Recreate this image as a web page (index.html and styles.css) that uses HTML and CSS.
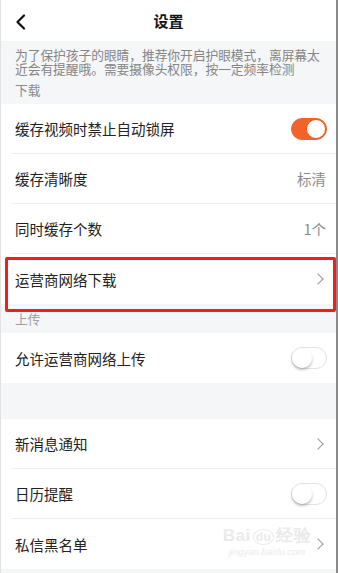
FILE: index.html
```html
<!DOCTYPE html>
<html lang="zh">
<head>
<meta charset="utf-8">
<link rel="stylesheet" href="styles.css">
</head>
<body>
<div class="page">
  <header class="topbar">
    <svg class="back" width="12" height="16" viewBox="0 0 12 16"><path d="M9 1.5 L2.5 8 L9 14.5" fill="none" stroke="#111" stroke-width="2.2" stroke-linecap="round" stroke-linejoin="round"/></svg>
    <div class="title">设置</div>
  </header>
  <div class="notice">为了保护孩子的眼睛，推荐你开启护眼模式，离屏幕太近会有提醒哦。需要摄像头权限，按一定频率检测</div>
  <div class="section-label">下载</div>
  <div class="group">
    <div class="row"><span class="label">缓存视频时禁止自动锁屏</span><span class="switch on"><span class="knob"></span></span></div>
    <div class="row"><span class="label">缓存清晰度</span><span class="value">标清</span></div>
    <div class="row"><span class="label">同时缓存个数</span><span class="value">1个</span></div>
    <div class="row last"><span class="label">运营商网络下载</span><span class="chev"></span></div>
  </div>
  <div class="section-label upload">上传</div>
  <div class="group">
    <div class="row last"><span class="label">允许运营商网络上传</span><span class="switch"><span class="knob"></span></span></div>
  </div>
  <div class="spacer"></div>
  <div class="group">
    <div class="row"><span class="label">新消息通知</span><span class="chev"></span></div>
    <div class="row"><span class="label">日历提醒</span><span class="switch"><span class="knob"></span></span></div>
    <div class="row last"><span class="label">私信黑名单</span><span class="chev"></span></div>
  </div>
  <div class="highlight"></div>
  <div class="watermark"><div class="wm-top">Bai<span class="wm-du">du</span>经验</div><div class="wm-url">jingyan.baidu.com</div></div>
</div>
</body>
</html>
```

FILE: styles.css
```css
* { box-sizing: border-box; }
html, body { margin: 0; padding: 0; }
body {
  width: 338px;
  height: 573px;
  overflow: hidden;
  background: #f5f6f8;
  font-family: "Noto Sans CJK SC", "Noto Sans", sans-serif;
}
.page {
  position: relative;
  width: 338px;
  height: 573px;
  background: #f5f6f8;
  border-left: 1px solid #e2e2e2;
  border-right: 2px solid #8a8a8a;
  overflow: hidden;
}
.topbar {
  height: 41px;
  background: #fff;
  display: flex;
  align-items: center;
  justify-content: center;
  position: relative;
}
.back {
  position: absolute;
  left: 14px;
  top: 14px;
}
.title {
  font-size: 15px;
  font-weight: 700;
  color: #151515;
  line-height: 20px;
}
.notice {
  height: 35px;
  padding: 7px 10px 0 14px;
  font-size: 12.8px;
  line-height: 14px;
  color: #858585;
  letter-spacing: -0.1px;
}
.section-label {
  height: 28px;
  padding-left: 14px;
  font-size: 12.8px;
  color: #8a8a8a;
  line-height: 28px;
}
.section-label.upload {
  height: 29px;
  line-height: 30px;
  color: #a0a0a0;
}
.group {
  background: #fff;
}
.row {
  height: 50px;
  margin-left: 10px;
  padding: 0 10px 0 4px;
  border-bottom: 1px solid #efefef;
  display: flex;
  align-items: center;
  justify-content: space-between;
}
.row.last { border-bottom: none; }
.label {
  font-size: 14.5px;
  color: #222;
}
.value {
  font-size: 14.5px;
  color: #8c8c8c;
}
.chev {
  width: 8px;
  height: 8px;
  border-top: 1.3px solid #9a9a9a;
  border-right: 1.3px solid #9a9a9a;
  transform: rotate(45deg);
  margin-right: 4px;
}
.switch {
  width: 36px;
  height: 22px;
  border-radius: 11px;
  border: 1px solid #e3e3e3;
  background: #fff;
  position: relative;
  margin-right: -1px;
}
.switch .knob {
  position: absolute;
  left: 0;
  top: 0;
  width: 20px;
  height: 20px;
  border-radius: 50%;
  background: #fff;
  box-shadow: 0 2px 3px rgba(0,0,0,0.25);
}
.switch.on {
  background: #f4622c;
  border-color: #f4622c;
}
.switch.on .knob {
  left: 14px;
  box-shadow: none;
  border: 1px solid #e8561f;
}
.spacer { height: 36px; }
.highlight {
  position: absolute;
  left: 4px;
  top: 257px;
  width: 331px;
  height: 55px;
  border: 3px solid #f41c1c;
  border-radius: 2px;
}
.watermark {
  position: absolute;
  left: 220px;
  top: 527px;
  width: 92px;
  text-align: center;
  color: #ebebeb;
  font-family: "Liberation Sans", sans-serif;
}
.wm-top {
  font-size: 17px;
  font-weight: 700;
  line-height: 18px;
  letter-spacing: 0.5px;
}
.wm-du {
  font-size: 12px;
  border: 1.5px solid #ebebeb;
  border-radius: 50%;
  padding: 0 2px;
  margin: 0 2px;
}
.wm-url {
  font-size: 9.5px;
  line-height: 12px;
  font-style: italic;
}
```
